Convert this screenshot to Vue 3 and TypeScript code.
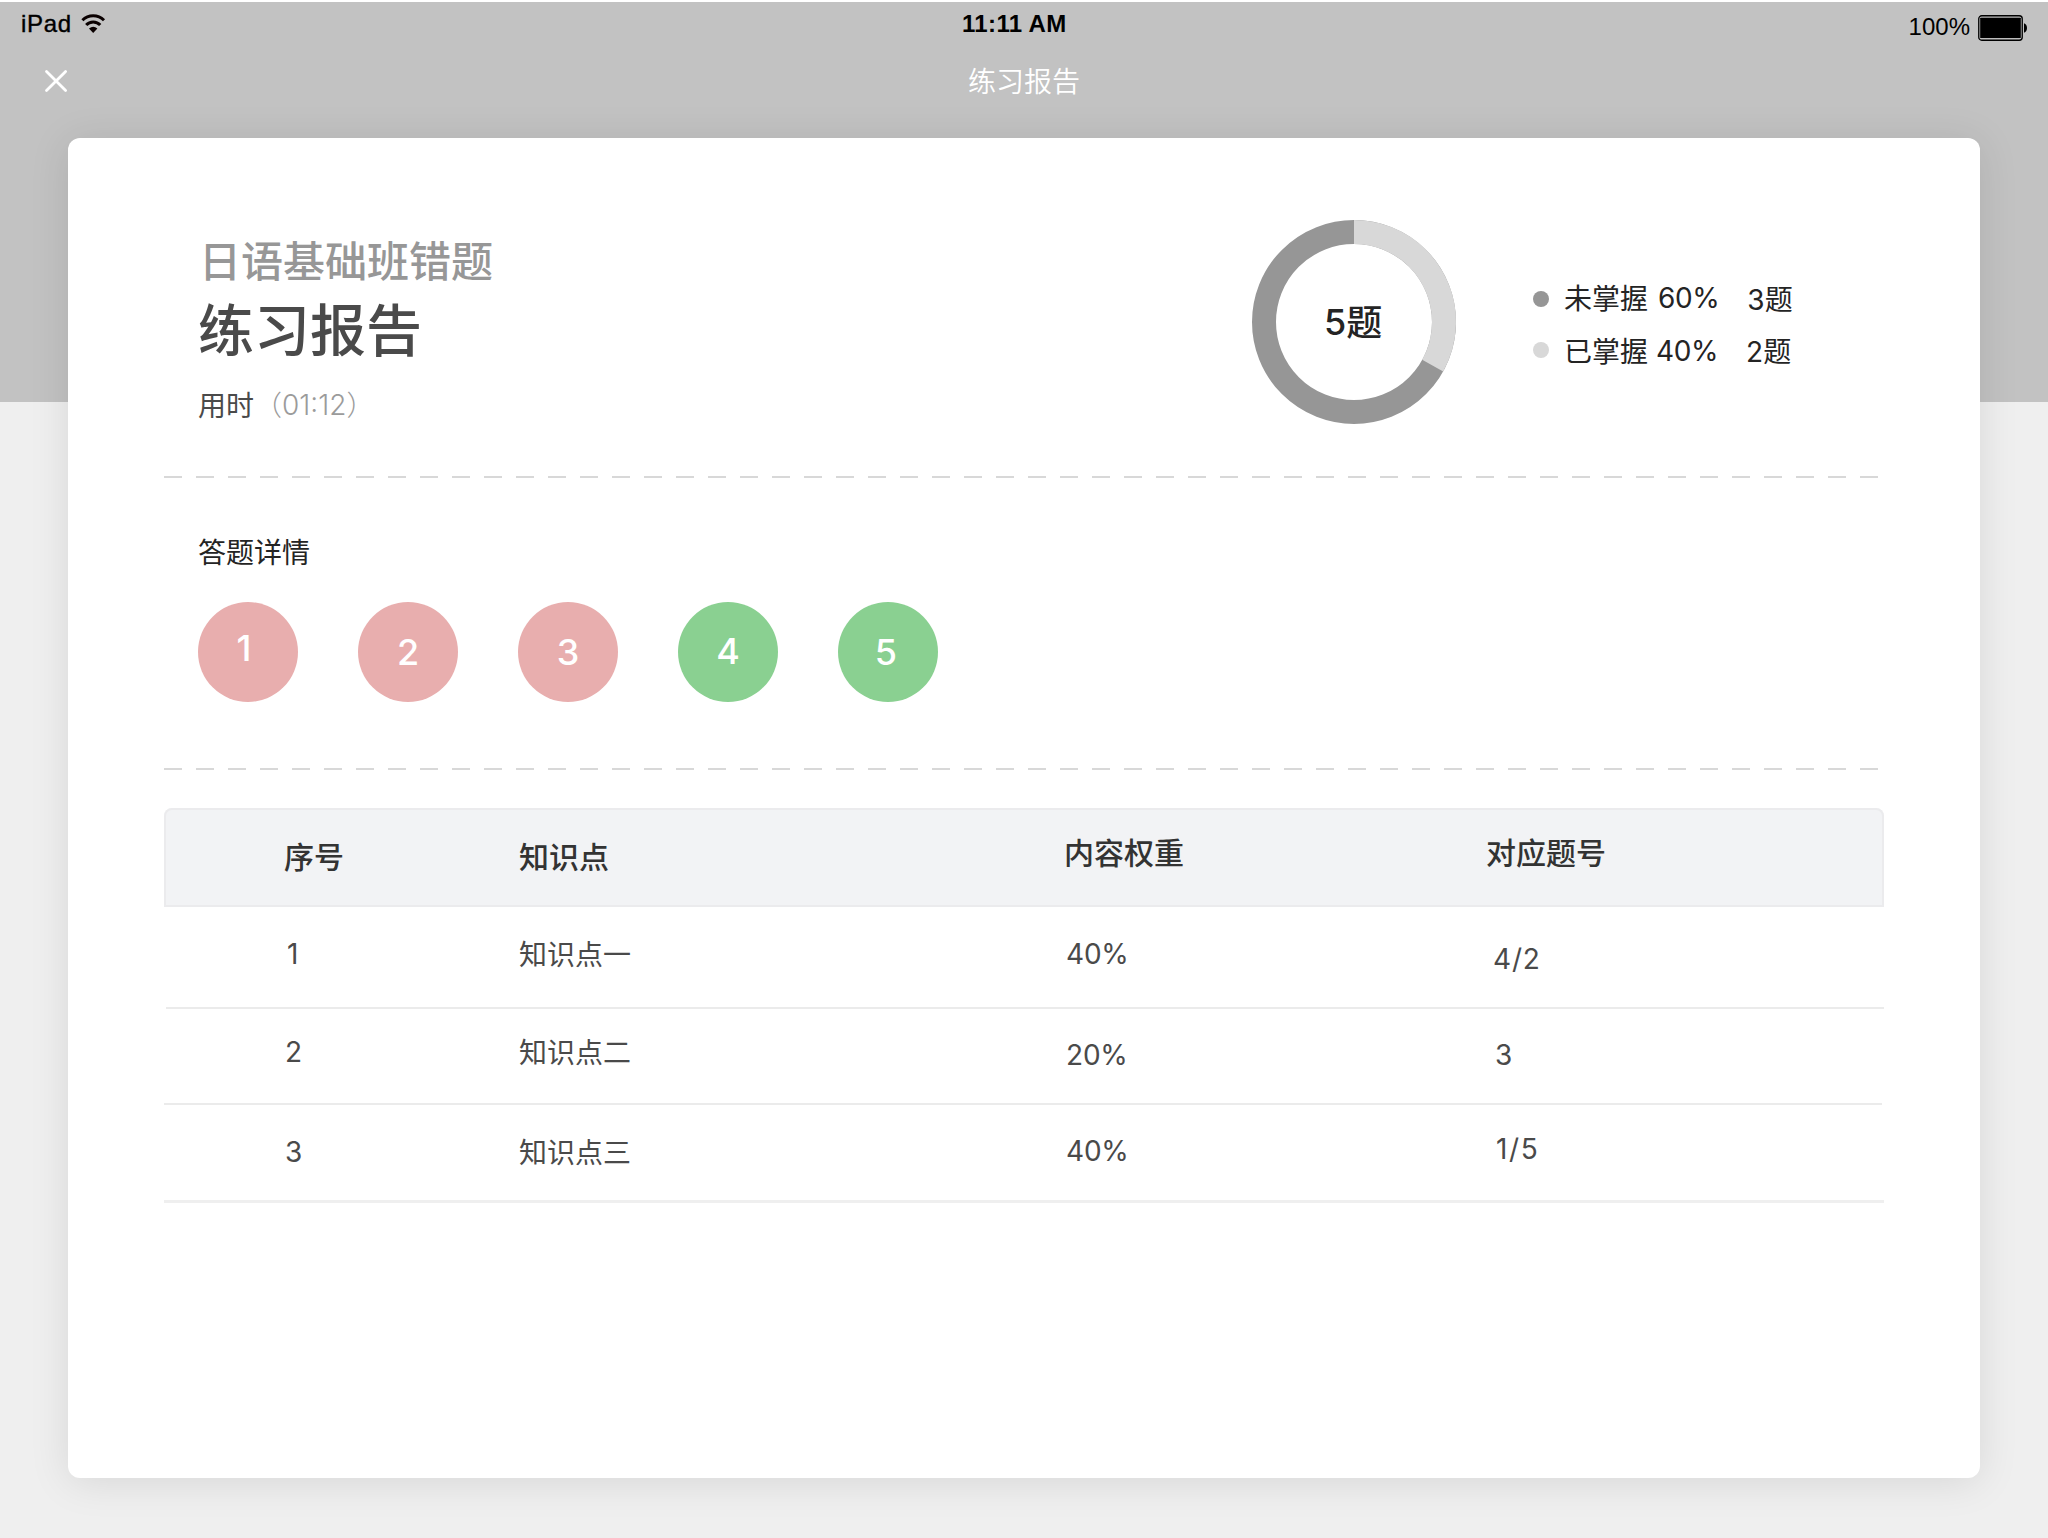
<script setup lang="ts">
interface Answer { no: number; state: 'wrong' | 'right' }
interface Row { no: string; name: string; weight: string; questions: string }

const answers: Answer[] = [
  { no: 1, state: 'wrong' },
  { no: 2, state: 'wrong' },
  { no: 3, state: 'wrong' },
  { no: 4, state: 'right' },
  { no: 5, state: 'right' },
]
const rows: Row[] = [
  { no: '1', name: '知识点一', weight: '40%', questions: '4/2' },
  { no: '2', name: '知识点二', weight: '20%', questions: '3' },
  { no: '3', name: '知识点三', weight: '40%', questions: '1/5' },
]
</script>

<template>
  <div class="page">
    <header class="status">
      <span class="device">iPad</span>
      <svg class="wifi" width="26" height="22" viewBox="80 12 26 22">
        <path d="M82.4 20.2A15.4 15.4 0 0 1 104 20.2" fill="none" stroke="#0a0000" stroke-width="3" />
        <path d="M86.2 25.1A9.4 9.4 0 0 1 100.2 25.1" fill="none" stroke="#0a0000" stroke-width="3" />
        <path d="M89 28.6Q93.2 24.8 97.4 28.6L93.2 33Z" fill="#0a0000" />
      </svg>
      <span class="clock">11:11 AM</span>
      <span class="charge">100%</span>
      <svg class="battery" width="50" height="26" viewBox="0 0 50 26">
        <rect x=".75" y=".75" width="43.5" height="24.5" rx="3" fill="#bdbdbd" stroke="#000" stroke-width="1.3" />
        <rect x="2.2" y="2.7" width="40.6" height="20.4" rx=".6" />
        <path d="M46 8.2Q49 9.5 49 13T46 17.8Z" />
      </svg>
    </header>
    <nav class="nav">
      <svg class="close" width="24" height="24" viewBox="0 0 24 24">
        <path d="M2.5 2.5 21.6 21.6M21.6 2.5 2.5 21.6" stroke="#fff" stroke-width="2.8" stroke-linecap="round" />
      </svg>
      <span class="nav-title">练习报告</span>
    </nav>

    <main class="card">
      <section class="summary">
        <div class="heading">
          <h2>日语基础班错题</h2>
          <h1>练习报告</h1>
          <p class="time"><span>用时</span><span class="paren">（</span><span class="dur">01:12</span><span class="paren">）</span></p>
        </div>
        <div class="donut">
          <svg width="204" height="204" viewBox="-102 -102 204 204">
            <circle r="90" fill="none" stroke="#969696" stroke-width="24" />
            <path d="M0-90A90 90 0 0 1 78.7 43.6" fill="none" stroke="#d8d8d8" stroke-width="24" />
          </svg>
          <div class="total"><span class="num">5</span><span class="unit">题</span></div>
        </div>
        <ul class="legend">
          <li><i class="dot dark"></i><span class="label">未掌握</span><span class="pct num">60%</span><span class="count"><span class="num">3</span><span class="unit">题</span></span></li>
          <li><i class="dot"></i><span class="label">已掌握</span><span class="pct num">40%</span><span class="count"><span class="num">2</span><span class="unit">题</span></span></li>
        </ul>
      </section>
      <div class="dash"></div>
      <section class="detail">
        <h3>答题详情</h3>
        <div class="answers">
          <div v-for="a in answers" :key="a.no" class="answer" :class="a.state"><span class="num">{{ a.no }}</span></div>
        </div>
      </section>
      <div class="dash"></div>
      <section class="table">
        <div class="row head">
          <span>序号</span><span>知识点</span><span>内容权重</span><span>对应题号</span>
        </div>
        <div v-for="r in rows" :key="r.no" class="row body">
          <span class="num">{{ r.no }}</span><span>{{ r.name }}</span><span class="num">{{ r.weight }}</span><span class="num">{{ r.questions }}</span>
        </div>
      </section>
    </main>
  </div>
</template>

<style>
body { background: #efefef; }
</style>

<style scoped>
.page {
  width: 2048px;
  height: 1538px;
  box-sizing: border-box;
  border-top: 2px solid #fff;
  background: linear-gradient(#c2c2c2 400px, #efefef 400px);
  font-family: "Noto Sans CJK SC", sans-serif;
  font-size: 28px;
  line-height: 40px;
  color: #4a4a4a;
  overflow: hidden;
}
.page h1, .page h2, .page h3, .page p, .page ul { margin: 0; padding: 0; list-style: none; }
.num { font-family: Inter, sans-serif; }

.status {
  display: flex;
  align-items: flex-start;
  height: 48px;
  font: 24px/32px "Liberation Sans", sans-serif;
  color: #000;
}
.device { width: 59px; padding: 6px 0 0 21px; letter-spacing: .7px; -webkit-text-stroke: .4px #000; }
.wifi { margin-top: 10px; }
.clock { margin: 6px 0 0 856px; font-weight: 700; letter-spacing: .35px; }
.charge { margin: 9px 0 0 auto; }
.battery { margin: 13px 20px 0 8px; }

.nav { display: flex; height: 88px; }
.close { margin: 19px 0 0 44px; }
.nav-title { margin: 10px 0 0 900px; font-weight: 350; color: #fff; }

.card {
  box-sizing: border-box;
  width: 1912px;
  height: 1340px;
  margin-left: 68px;
  border-radius: 12px;
  background: #fff;
  box-shadow: 0 4px 40px rgba(0, 0, 0, .1);
}

.summary { display: flex; align-items: flex-start; height: 338px; color: #242424; }
.heading { width: 1054px; padding: 91px 0 0 130px; color: #4a4a4a; }
.heading h2 { padding-left: 1px; font-size: 42px; line-height: 60px; font-weight: 500; color: #979797; }
.heading h1 { margin-top: 3px; font-size: 56px; line-height: 70px; font-weight: 500; }
.page .time { display: flex; padding-top: 22px; }
.time .paren { color: #9b9b9b; font-weight: 300; }
.time .dur { margin-top: 1px; font-family: Inter, sans-serif; font-weight: 300; color: #9b9b9b; }

.donut { display: grid; width: 204px; height: 204px; margin-top: 82px; }
.donut > * { grid-area: 1 / 1; }
.total { display: flex; place-self: start; margin: 76px 0 0 72px; font-size: 36px; line-height: 50px; font-weight: 500; }
.total .num { margin-top: 1px; }
.total .unit { margin-top: -1px; }
.page .legend { padding: 138px 0 0 77px; }
.legend li { display: flex; height: 51px; }
.dot { width: 16px; height: 16px; margin: 15px 15px 0 0; border-radius: 50%; background: #d8d8d8; }
.dot.dark { background: #969696; }
.label { margin-top: 1px; }
.pct { margin: 2px 0 0 10px; letter-spacing: -.4px; }
.count { display: flex; margin: 2px 0 0 28px; }
.count .num { margin-top: 2px; }
.legend li:nth-child(2) .label { margin-top: 3px; }
.legend li:nth-child(2) .pct { margin: 4px 0 0 8px; }
.legend li:nth-child(2) .count { margin: 3px 0 0 28px; }

.dash {
  width: 1714px;
  height: 2px;
  margin-left: 96px;
  background: repeating-linear-gradient(90deg, #d8d8d8 0 18px, transparent 18px 32px);
}

.detail { height: 290px; padding-left: 130px; box-sizing: border-box; }
.detail h3 { padding-top: 53px; font-size: 28px; font-weight: 400; color: #242424; }
.answers { display: flex; gap: 60px; margin-top: 31px; }
.answer {
  width: 100px;
  height: 100px;
  box-sizing: border-box;
  border-radius: 50%;
  display: flex;
  justify-content: center;
  font-size: 36px;
  line-height: 100px;
  font-weight: 450;
  color: #fff;
}
.answer:nth-child(1) { padding-right: 8px; line-height: 92px; }
.answer:nth-child(4) { line-height: 98px; }
.answer:nth-child(5) { padding-right: 4px; }
.wrong { background: #e8aeae; }
.right { background: #8ad091; }

.table { width: 1720px; margin: 38px 0 0 96px; }
.row { display: grid; grid-template-columns: 355px 547px 422px 1fr; box-sizing: border-box; }
.head {
  height: 99px;
  padding-top: 27px;
  border-radius: 8px 8px 0 0;
  background: #f2f3f5;
  box-shadow: inset 0 0 0 2px #ebebed;
  font-size: 30px;
  font-weight: 500;
  color: #333;
}
.head span:first-child { padding-left: 120px; }
.head span:nth-child(n + 3) { margin: -4px 0 0 -2px; }
.body { height: 102px; border-bottom: 2px solid #ebebeb; }
.body span { padding-top: 26px; }
.body .num { padding-top: 27px; font-weight: 370; letter-spacing: -.2px; }
.body .num:first-child { padding-left: 121px; }
.body .num:last-child { padding: 32px 0 0 5px; letter-spacing: .8px; }
.body:nth-child(2) { margin-left: 2px; grid-template-columns: 353px 547px 422px 1fr; }
.body:nth-child(3) { width: 1718px; height: 96px; }
.body:nth-child(3) span { padding-top: 22px; }
.body:nth-child(3) .num { padding-top: 23px; }
.body:nth-child(3) .num:nth-child(3) { padding-top: 26px; }
.body:nth-child(3) .num:last-child { padding: 26px 0 0 7px; }
.body:nth-child(4) { height: 98px; border-bottom: 3px solid #efefef; }
.body:nth-child(4) .num:nth-child(3) { padding-top: 26px; }
.body:nth-child(4) .num:last-child { padding: 24px 0 0 8px; letter-spacing: 1.6px; }
</style>
